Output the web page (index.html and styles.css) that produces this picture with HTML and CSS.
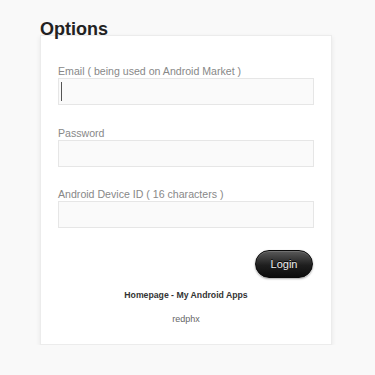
FILE: index.html
```html
<!DOCTYPE html>
<html>
<head>
<meta charset="utf-8">
<link rel="stylesheet" href="styles.css">
</head>
<body>
<div class="page">
  <h1 class="title">Options</h1>
  <div class="card">
    <div class="field">
      <label class="label">Email ( being used on Android Market )</label>
      <div class="input focused"><span class="caret"></span></div>
    </div>
    <div class="field">
      <label class="label">Password</label>
      <div class="input"></div>
    </div>
    <div class="field">
      <label class="label">Android Device ID ( 16 characters )</label>
      <div class="input"></div>
    </div>
    <div class="actions">
      <button class="login">Login</button>
    </div>
    <div class="homepage">Homepage - My Android Apps</div>
    <div class="author">redphx</div>
  </div>
</div>
</body>
</html>
```

FILE: styles.css
```css
html, body {
  margin: 0;
  padding: 0;
  background: #f9f9f9;
  font-family: "Liberation Sans", Arial, sans-serif;
}
.page {
  padding: 0 43px 0 40px;
}
.title {
  margin: 20px 0 -3px 0;
  font-size: 18px;
  line-height: 18px;
  font-weight: bold;
  color: #222;
}
.card {
  background: #fff;
  border: 1px solid #ececec;
  box-shadow: 0 2px 5px rgba(0,0,0,0.08);
  padding: 29px 17px 19px 17px;
}
.field {
  margin-bottom: 21.5px;
}
.field:nth-child(3) {
  margin-bottom: 22px;
}
.label {
  display: block;
  font-size: 10.6px;
  line-height: 13px;
  color: #888;
}
.input {
  box-sizing: border-box;
  height: 27px;
  background: #fafafa;
  border: 1px solid #e6e6e6;
  padding: 3px 2px;
}
.caret {
  display: block;
  width: 1px;
  height: 19px;
  background: #555;
}
.actions {
  display: flex;
  justify-content: flex-end;
  padding-right: 1px;
}
.login {
  box-sizing: border-box;
  width: 58px;
  height: 28px;
  border-radius: 14px;
  border: 1px solid #0a0a0a;
  background: linear-gradient(#5a5a5a, #1e1e1e 55%, #0c0c0c);
  box-shadow: 0 1px 2px rgba(0,0,0,0.35), inset 0 1px 0 rgba(255,255,255,0.15);
  color: #eee;
  font-family: "Liberation Sans", Arial, sans-serif;
  font-size: 11px;
  padding: 0;
  text-shadow: 0 -1px 0 #000;
}
.homepage {
  margin-top: 11px;
  text-align: center;
  font-size: 8.7px;
  line-height: 12px;
  font-weight: bold;
  color: #333;
}
.author {
  margin-top: 12px;
  text-align: center;
  font-size: 9px;
  line-height: 12px;
  color: #666;
}
```
